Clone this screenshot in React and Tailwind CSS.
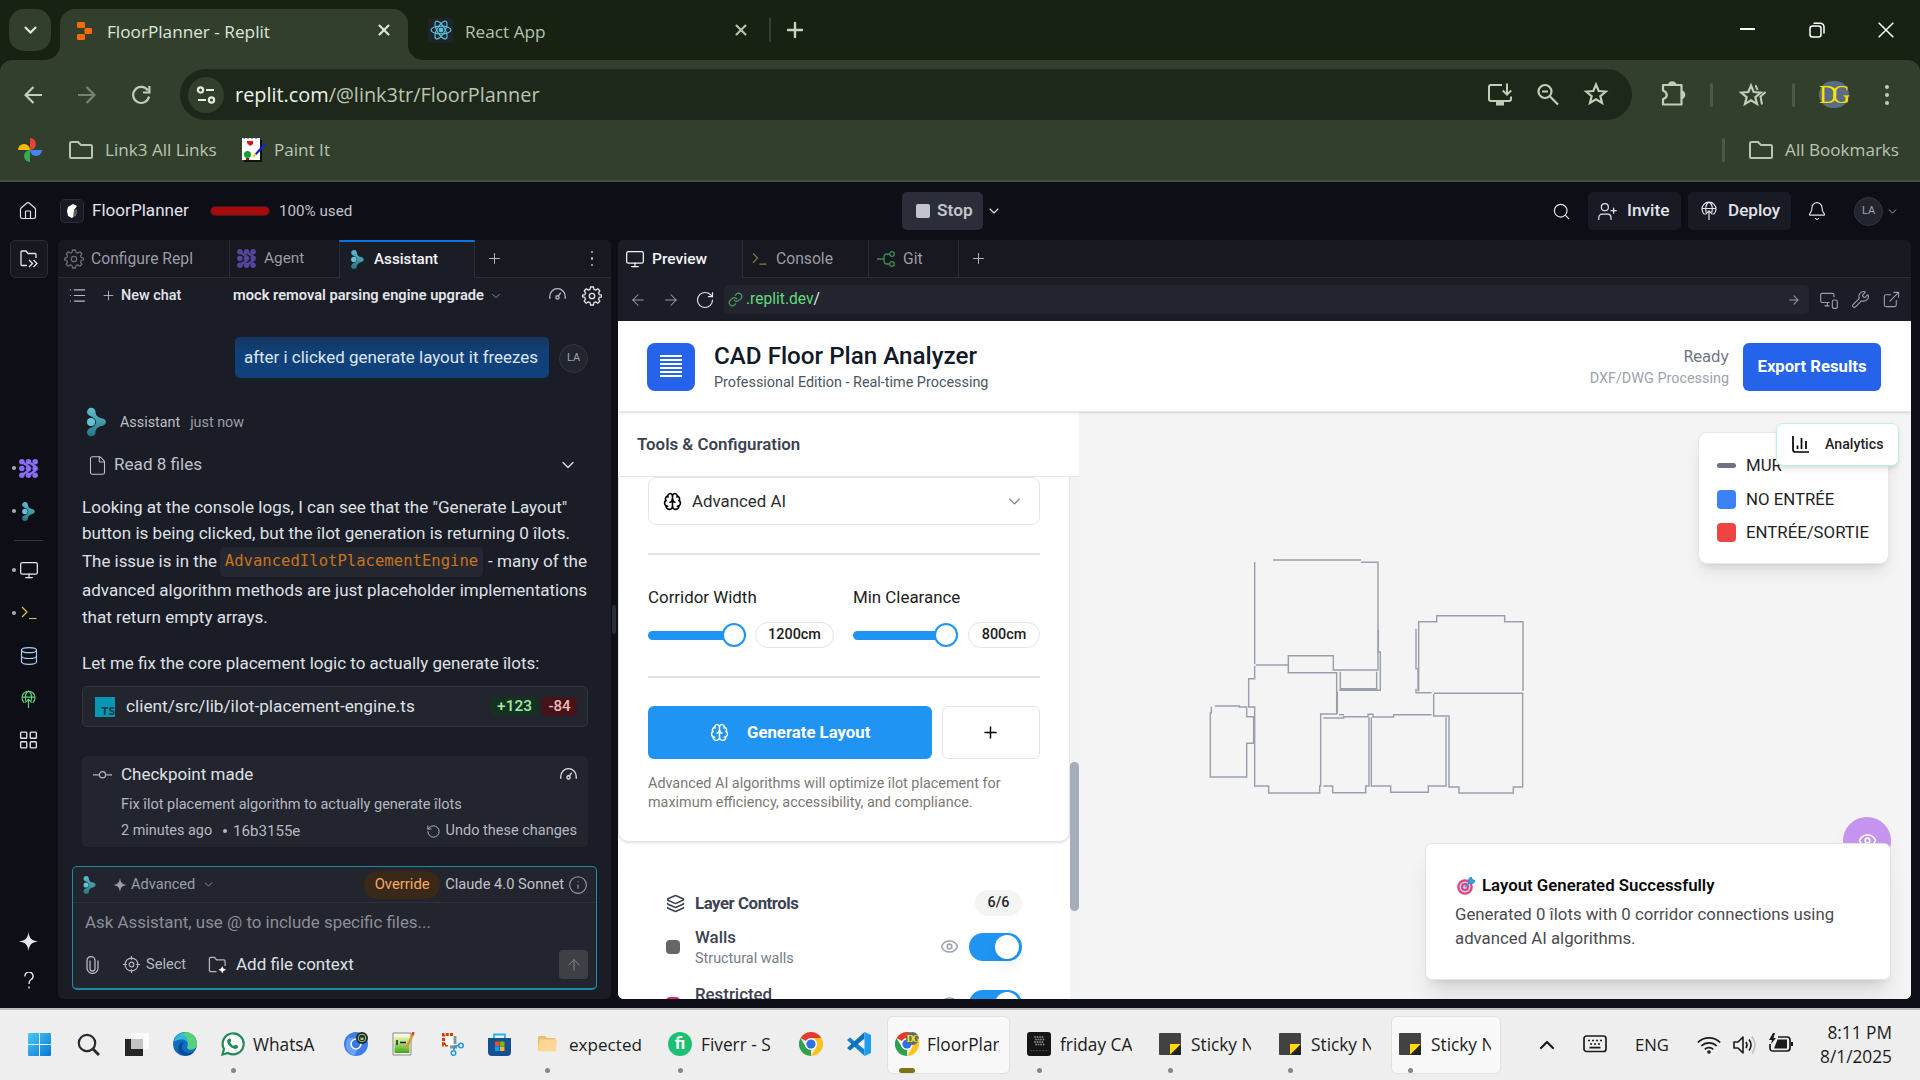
import React from "react";
import {
  ArrowLeft, ArrowRight, ArrowUp, Bell, Brain, ChevronDown, ChevronUp, Database, ExternalLink, Eye, File,
  Home, Info, Layers, LayoutGrid, Link, List, Monitor, MonitorSmartphone, Plus,
  RotateCcw, RotateCw, Search, Settings, UserPlus, Wrench, X,
} from "lucide-react";

/* ---------- shared glyphs ---------- */

function AssistantMark({ className }) {
  return (
    <svg viewBox="0 0 20 30" className={className} fill="none">
      <defs>
        <linearGradient id="am" x1="0" y1="0" x2="0" y2="1">
          <stop offset="0" stopColor="#5fbdd0" />
          <stop offset="1" stopColor="#277684" />
        </linearGradient>
      </defs>
      <path d="M4.500 0C7 0 9 2 9 4.500c0 4 3 6 6.500 6.500 2.500.5 4.500 2 4.500 4s-2 3.800-4.500 4.200C12 20 9 22 9 26c0 2.500-2 4-4.500 4S0 28.500 0 26s1.500-4 4-5c3-1.200 5.500-3 5.500-6S7 10.200 4 9C1.500 8 0 6.800 0 4.500S2 0 4.500 0Z" fill="url(#am)" />
      <circle cx="4.300" cy="15" r="4.300" fill="#62c4d8" />
    </svg>
  );
}

function AgentMark({ className }) {
  return (
    <svg viewBox="0 0 20 20" className={className} fill="currentColor" stroke="currentColor">
      {[3, 10, 17].map((x) => [3, 10, 17].map((y) => <circle key={`${x}-${y}`} cx={x} cy={y} r="2.900" stroke="none" />))}
      <path d="M3 3 L10 8 M10 3 L17 8 M3 17 L10 12 M10 17 L17 12" strokeWidth="2.600" strokeLinecap="round" />
    </svg>
  );
}

function Spark({ className }) {
  return (
    <svg viewBox="0 0 20 20" className={className} fill="currentColor">
      <path d="M10 0c.9 6.500 3 9.100 10 10-7 .9-9.100 3.500-10 10-.9-6.500-3-9.100-10-10 7-.9 9.100-3.500 10-10Z" />
    </svg>
  );
}

function Prompt({ className }) {
  return (
    <svg viewBox="0 0 16 14" className={className} fill="none" stroke="currentColor" strokeWidth="1.200">
      <path d="M1 1l5 5-5 5M8 12.500h7.500" />
    </svg>
  );
}

function DeployGlobe({ className }) {
  return (
    <svg viewBox="0 0 16 20" className={className} fill="none" stroke="currentColor" strokeWidth="1.200">
      <path d="M3.500 13.500A7 7 0 1 1 12.500 13.500M1.300 7.500h13.400M5.200 11.500c-1-3.500-.6-8 2.800-10.500 3.400 2.500 3.800 7 2.800 10.500M8 19v-9M4.500 13.300 8 9.800l3.500 3.500" />
    </svg>
  );
}

function Folder({ className }) {
  return (
    <svg viewBox="0 0 24 18" className={className} fill="none" stroke="currentColor" strokeWidth="2" strokeLinejoin="round">
      <path d="M1 15.500v-13Q1 1 2.500 1H9l3 3h9.500Q23 4 23 5.500v10q0 1.500-1.500 1.500h-19Q1 17 1 15.500Z" />
    </svg>
  );
}

function Star({ className }) {
  return (
    <svg viewBox="0 0 24 24" className={className} fill="none" stroke="currentColor" strokeWidth="2">
      <path d="M12 3.200l2.500 6 6.500.5-5 4.200 1.600 6.400L12 16.900l-5.600 3.400L8 13.900 3 9.700l6.500-.5Z" />
    </svg>
  );
}

function ChromeLogo({ className }) {
  return (
    <svg viewBox="0 0 24 24" className={className}>
      <path d="M12 12 1.600 6A12 12 0 0 1 22.400 6Z" fill="#e33b2e" />
      <path d="M12 6h10.400A12 12 0 0 1 12 24l5.200-9Z" fill="#fcc31e" />
      <path d="M1.600 6 6.800 15 12 18v6A12 12 0 0 1 1.600 6Z" fill="#2da14c" />
      <circle cx="12" cy="12" r="6" fill="#fff" />
      <circle cx="12" cy="12" r="4.600" fill="#2f6fe8" />
    </svg>
  );
}

/* ---------- browser ---------- */

function TabStrip() {
  return (
    <div className="flex h-[60px] items-start bg-[#182213] text-[#dfe6da]">
      <div className="ml-[9px] mt-[9px] flex size-[42px] items-center justify-center rounded-[15px] bg-[#323f2d]">
        <svg viewBox="0 0 14 9" className="w-[13px]" fill="none" stroke="currentColor" strokeWidth="2.400"><path d="M1 1l6 6 6-6" /></svg>
      </div>
      <div className="relative ml-[9px] mt-[9px] flex h-[51px] w-[348px] rounded-t-[15px] bg-[#323f2d]">
        <svg viewBox="0 0 15 15" className="absolute bottom-0 -left-[15px] size-[15px]"><path d="M15 0V15H0A15 15 0 0 0 15 0Z" fill="#323f2d" /></svg>
        <svg viewBox="0 0 15 15" className="absolute -right-[15px] bottom-0 size-[15px]"><path d="M0 0V15H15A15 15 0 0 1 0 0Z" fill="#323f2d" /></svg>
        <div className="flex h-[44px] w-full items-center">
          <svg viewBox="0 0 15 18" className="-mt-[1px] ml-[17px] h-[18px] w-[15px]" fill="#f96a0b">
            <rect width="8" height="6" rx="1.200" /><rect x="7.500" y="6" width="7.500" height="6" rx="1.200" /><rect y="12" width="8" height="6" rx="1.200" />
          </svg>
          <span className="mt-[2px] ml-[15px] text-[17.200px]">FloorPlanner - Replit</span>
          <X className="-mt-[2px] mr-[15px] ml-auto size-[18px]" strokeWidth={2.800} />
        </div>
      </div>
      <div className="mt-[9px] flex h-[44px] items-center text-[#b4c4a9]">
        <div className="mt-[-2px] ml-[20px] flex h-[25px] w-[25px] items-center justify-center rounded-[3px] bg-[#20232a]">
          <svg viewBox="0 0 22 22" className="size-[22px]" fill="none" stroke="#58c4dc" strokeWidth="1.200">
            <ellipse cx="11" cy="11" rx="10" ry="3.900" /><ellipse cx="11" cy="11" rx="10" ry="3.900" transform="rotate(60 11 11)" />
            <ellipse cx="11" cy="11" rx="10" ry="3.900" transform="rotate(120 11 11)" /><circle cx="11" cy="11" r="1.800" fill="#58c4dc" />
          </svg>
        </div>
        <span className="mt-[2px] ml-[12px] w-[267px] text-[17.200px]">React App</span>
        <X className="mt-[-2px] size-[18px]" strokeWidth={2.800} />
        <div className="mt-[-2px] ml-[19px] h-[24px] w-[2px] bg-[#34412f]" />
        <Plus className="mt-[-2px] ml-[12px] size-[24px] text-[#c6d3bd]" strokeWidth={2.400} />
      </div>
      <div className="ml-auto flex h-[60px] items-center text-white">
        <div className="flex w-[69px] justify-center"><div className="-mt-[2px] h-[2px] w-[15px] bg-white" /></div>
        <div className="flex w-[69px] justify-center">
          <svg viewBox="0 0 16 16" className="-mt-[1px] size-[16px]" fill="none" stroke="currentColor" strokeWidth="1.500">
            <rect x="1" y="4" width="11" height="11" rx="2.500" /><path d="M4.500 1.200H11A4 4 0 0 1 15 5v6.500" />
          </svg>
        </div>
        <div className="flex w-[69px] justify-center">
          <svg viewBox="0 0 16 16" className="-mt-[1px] size-[16px]" fill="none" stroke="currentColor" strokeWidth="1.500"><path d="M.7.7l14.600 14.600M15.300.7.7 15.300" /></svg>
        </div>
      </div>
    </div>
  );
}

function NavArrow({ className, flip }) {
  return (
    <svg viewBox="0 0 18 18" className={className} fill="none" stroke="currentColor" strokeWidth="2.200">
      <path d={flip ? "M0 9h16.500M8.500 1l8 8-8 8" : "M18 9H1.500M9.500 1l-8 8 8 8"} />
    </svg>
  );
}

function AddressRow() {
  return (
    <div className="bg-[#182213]">
      <div className="flex h-[69px] items-center rounded-t-[12px] bg-[#323f2d] pl-[6px] text-[#c0cfb6]">
        <div className="flex w-[54px] justify-center"><NavArrow className="size-[18px]" /></div>
        <div className="flex w-[54px] justify-center"><NavArrow flip className="size-[18px] text-[#76856e]" /></div>
        <div className="flex w-[54px] justify-center">
          <svg viewBox="0 0 20 20" className="size-[20px]" fill="none" stroke="currentColor" strokeWidth="2.200">
            <path d="M16.800 5.500A8 8 0 1 0 18 11.500M18.400 1v6.500H12" />
          </svg>
        </div>
        <div className="ml-[12px] flex h-[51px] w-[1452px] items-center rounded-full bg-[#1e281a]">
          <div className="ml-[8px] flex size-[36px] items-center justify-center rounded-full bg-[#323f2d] text-[#e3ebdd]">
            <svg viewBox="0 0 20 18" className="h-[18px] w-[20px]" fill="none" stroke="currentColor" strokeWidth="2.200">
              <circle cx="4.500" cy="4" r="2.600" /><path d="M10 4h8M2 14h8" /><circle cx="15.500" cy="14" r="2.600" />
            </svg>
          </div>
          <span className="ml-[11px] text-[19.900px] text-[#b9c5b1]"><span className="text-[#edf3e8]">replit.com</span>/@link3tr/FloorPlanner</span>
          <div className="mr-[12px] ml-auto flex">
            <div className="flex w-[48px] justify-center">
              <svg viewBox="0 0 24 22" className="w-[24px]" fill="none" stroke="currentColor" strokeWidth="2">
                <path d="M14 1.500H3Q1 1.500 1 3.500v12q0 2 2 2h18q2 0 2-2V13M19 0v11M14.800 7 19 11.200 23.200 7" /><path d="M8 20h8" strokeWidth="4" />
              </svg>
            </div>
            <div className="flex w-[48px] justify-center">
              <svg viewBox="0 0 22 22" className="w-[22px]" fill="none" stroke="currentColor" strokeWidth="2.200"><circle cx="8" cy="8" r="6.500" /><path d="M13 13l8 8M5 8h6" /></svg>
            </div>
            <div className="flex w-[48px] justify-center"><Star className="-mt-[1px] size-[26px]" /></div>
          </div>
        </div>
        <div className="ml-[16px] flex w-[50px] justify-center">
          <svg viewBox="0 0 25 25" className="-mt-[3px] size-[25px]" fill="none" stroke="currentColor" strokeWidth="2.200" strokeLinejoin="round">
            <path d="M2 4h18.500v19.500H2v-5.500c5-1.500 5-6.500 0-8.500Z" />
            <path d="M8 3.500a3.500 3.500 0 0 1 6.500 0M21 10.500a3.500 3.500 0 0 1 0 6.500Z" fill="currentColor" />
          </svg>
        </div>
        <div className="ml-[12px] h-[24px] w-[3px] rounded bg-[#4a5a43]" />
        <div className="relative ml-[19px] flex w-[42px]">
          <Star className="ml-[6px] size-[26px]" />
          <svg viewBox="0 0 10 24" className="absolute top-[1px] left-[23px] h-[24px] w-[11px]" fill="none" stroke="currentColor" strokeWidth="2"><path d="M0 2l2 5M10 9l-5 4.500 1.500 8" /></svg>
        </div>
        <div className="ml-[18px] h-[24px] w-[3px] rounded bg-[#4a5a43]" />
        <div className="ml-[24px] flex h-[27px] w-[30px] items-center justify-center rounded-full bg-[#5a6d80] font-['Liberation_Serif'] text-[25px] tracking-[-5px] text-[#ffe000]">
          <span className="-ml-[4px]">DG</span>
        </div>
        <div className="ml-[23px] flex w-[30px] flex-col items-center gap-[4px]">
          <div className="size-[4px] rounded-full bg-current" /><div className="size-[4px] rounded-full bg-current" /><div className="size-[4px] rounded-full bg-current" />
        </div>
      </div>
    </div>
  );
}

function BookmarksRow() {
  return (
    <div className="flex h-[53px] items-start border-b-[2px] border-[#434d3d] bg-[#323f2d] text-[17.100px] text-[#b9c5b1]">
      <div className="flex h-[42px] flex-1 items-center">
        <svg viewBox="0 0 24 24" className="ml-[18px] size-[24px]">
          <path d="M12 0a6 6 0 0 1 0 12Z" fill="#ea4335" /><path d="M24 12a6 6 0 0 1-12 0Z" fill="#4285f4" />
          <path d="M12 24a6 6 0 0 1 0-12Z" fill="#34a853" /><path d="M0 12a6 6 0 0 1 12 0Z" fill="#fbbc04" />
        </svg>
        <Folder className="ml-[27px] w-[24px]" />
        <span className="ml-[12px] w-[112px] whitespace-nowrap">Link3 All Links</span>
        <svg viewBox="0 0 24 24" className="ml-[25px] size-[24px]">
          <path d="M2 2h18v22H2Z" fill="#111" /><path d="M0 0h18v22H0Z" fill="#fff" /><path d="M1 .5h16" stroke="#999" strokeDasharray="2 2" /><path d="M5 3h6v3L8 8 5 5Z" fill="#d8121c" />
          <circle cx="5.500" cy="16.500" r="3.500" fill="#12a02c" /><path d="M4 20h3v2H4Z" fill="#b01218" /><path d="M13 17 23 6" stroke="#1620d8" strokeWidth="2.200" /><path d="M11 19l3-3" stroke="#e8d020" strokeWidth="2" />
        </svg>
        <span className="ml-[8px] whitespace-nowrap">Paint It</span>
        <div className="ml-auto h-[24px] w-[3px] rounded bg-[#4a5a43]" />
        <Folder className="ml-[24px] w-[24px]" />
        <span className="mr-[21px] ml-[12px] whitespace-nowrap">All Bookmarks</span>
      </div>
    </div>
  );
}

/* ---------- workspace header and rail ---------- */

function WorkspaceHeader() {
  return (
    <div className="flex h-[58px] items-center text-[#e2e3ea]">
      <Home className="ml-[18px] size-[20px]" strokeWidth={1.400} />
      <div className="ml-[22px] flex size-[24px] items-center justify-center rounded-[5px] border border-[#2c2f3a] bg-[#191b24]">
        <svg viewBox="0 0 14 14" className="size-[14px]"><path d="M3 3 8 0l4 2-3 4 2 5-4 3-4-2-1-5Z" fill="#fff" /><path d="M9 6l3-1v5l-4 3Z" fill="#506058" /></svg>
      </div>
      <span className="-mt-[1px] ml-[8px] w-[97px] text-[17.100px]">FloorPlanner</span>
      <div className="ml-[21px] h-[10px] w-[60px] rounded-full border border-[#3b1c24] bg-[#a80909]" />
      <span className="ml-[9px] w-[74px] text-[15.200px] whitespace-nowrap text-[#c3c5cc]">100% used</span>
      <div className="ml-[549px] flex h-[38px] w-[81px] items-center rounded-[5px] bg-[#2b2d38] text-[#c2c4cd]">
        <div className="ml-[14px] size-[14px] rounded-[2px] bg-current" />
        <span className="ml-[7px] text-[17.300px] font-semibold">Stop</span>
      </div>
      <ChevronDown className="ml-[3px] size-[16px]" strokeWidth={1.600} />
      <Search className="ml-auto size-[19px]" strokeWidth={1.500} />
      <div className="ml-[17px] flex h-[38px] w-[93px] items-center rounded-[5px] bg-[#191b24]">
        <UserPlus className="ml-[9px] size-[21px]" strokeWidth={1.400} /><span className="ml-[9px] text-[17.300px] font-medium">Invite</span>
      </div>
      <div className="ml-[7px] flex h-[38px] w-[103px] items-center rounded-[5px] bg-[#191b24]">
        <DeployGlobe className="ml-[13px] h-[20px] w-[16px]" /><span className="ml-[11px] text-[17.100px] font-medium">Deploy</span>
      </div>
      <Bell className="ml-[16px] size-[20px]" strokeWidth={1.400} />
      <div className="ml-[27px] flex size-[29px] items-center justify-center rounded-full border border-[#32343f] bg-[#23252e] text-[11px] text-[#a0a3ad]">LA</div>
      <ChevronDown className="mr-[21px] ml-[3px] size-[13px] text-[#a0a3ad]" strokeWidth={1.800} />
    </div>
  );
}

function RailItem({ className, dot, children }) {
  return (
    <div className={`flex h-[24px] shrink-0 items-center ${className}`}>
      <div className={dot ? "ml-[12px] size-[4px] rounded-full bg-[#a9abb4]" : "ml-[12px] size-[4px]"} />
      <div className="ml-[2px] flex w-[21px] justify-center">{children}</div>
    </div>
  );
}

function Rail() {
  return (
    <div className="flex w-[58px] flex-col text-[#e6e7ec]">
      <div className="ml-[10px] flex size-[38px] shrink-0 items-center justify-center rounded-[5px] border border-[#2a2c36] bg-[#171820]">
        <svg viewBox="0 0 18 18" className="size-[18px]" fill="none" stroke="currentColor" strokeWidth="1.300"><path d="M7 15.500H2Q1 15.500 1 14.500V2Q1 1 2 1h4l2 2.500h7q1 0 1 1V8M9 10l3.500 3.500L9 17M13.500 10l3.500 3.500-3.500 3.500" /></svg>
      </div>
      <RailItem dot className="mt-[178px]"><AgentMark className="size-[19px] text-[#8b6cf5]" /></RailItem>
      <RailItem dot className="mt-[19px]"><AssistantMark className="h-[19px] w-[13px]" /></RailItem>
      <div className="mt-[17px] ml-[14px] h-px w-[29px] shrink-0 bg-[#33353f]" />
      <RailItem dot className="mt-[17px]"><Monitor className="size-[20px]" strokeWidth={1.500} /></RailItem>
      <RailItem dot className="mt-[19px]"><Prompt className="h-[14px] w-[16px] text-[#e0c75a]" /></RailItem>
      <RailItem className="mt-[19px]"><Database className="size-[20px] text-[#a9cdf5]" strokeWidth={1.400} /></RailItem>
      <RailItem className="mt-[19px]"><DeployGlobe className="h-[19px] w-[15px] text-[#5fd67c]" /></RailItem>
      <RailItem className="mt-[17px]"><LayoutGrid className="size-[22px]" strokeWidth={1.500} /></RailItem>
      <RailItem className="mt-[177px]"><Spark className="size-[19px]" /></RailItem>
      <RailItem className="mt-[15px]">
        <svg viewBox="0 0 10 17" className="h-[17px] w-[10px]" fill="none" stroke="currentColor" strokeWidth="1.400"><path d="M1 4.500A4 4 0 1 1 7 7.500C5.500 8.600 5 9.500 5 12M5 14.500v2" /></svg>
      </RailItem>
    </div>
  );
}

/* ---------- assistant panel ---------- */

function GearIcon({ className }) {
  return (
    <svg viewBox="0 0 20 20" className={className} fill="none" stroke="currentColor" strokeWidth="1.300" strokeLinejoin="round">
      <path d="M8.600 1h2.800l.6 2.400 1.700.7 2.100-1.300 2 2-1.300 2.100.7 1.700 2.400.6v1.600l-2.400.6-.7 1.700 1.300 2.100-2 2-2.100-1.300-1.700.7-.6 2.400H8.600L8 16.600l-1.700-.7-2.100 1.300-2-2 1.300-2.100-.7-1.700L.6 10.800V9.200L3 8.600l.6-1.700-1.300-2.100 2-2 2.100 1.300L8 3.400Z" />
      <circle cx="10" cy="10" r="2.700" />
    </svg>
  );
}

function GaugeIcon({ className }) {
  return (
    <svg viewBox="0 0 18 14" className={className} fill="none" stroke="currentColor" strokeWidth="1.400">
      <path d="M.8 12.500V10A8.200 8.200 0 0 1 17.200 10v2.500M10 9.300l2.500-3.300" /><circle cx="9" cy="11" r="1.700" />
    </svg>
  );
}

function ClipIcon({ className }) {
  return (
    <svg viewBox="0 0 13 18" className={className} fill="none" stroke="currentColor" strokeWidth="1.300" strokeLinecap="round">
      <path d="M4 5v7.500a2.500 2.500 0 0 0 5 0V4.500a3.800 3.800 0 0 0-8 0v7.500a5.400 5.400 0 0 0 11 0V5" />
    </svg>
  );
}

function AssistantPanel() {
  return (
    <div className="flex h-[759px] w-[553px] flex-col rounded-[6px] bg-[#1b1d26]">
      <div className="flex h-[38px] shrink-0 rounded-t-[6px] border-b border-[#2a2c36] bg-[#171820] text-[#9a9da6]">
        <div className="flex w-[172px] items-center border-r border-[#2a2c36]"><GearIcon className="ml-[6px] size-[20px] text-[#6a6d76]" /><span className="ml-[7px] text-[15.700px]">Configure Repl</span></div>
        <div className="flex w-[109px] items-center"><AgentMark className="ml-[7px] size-[19px] text-[#54459a]" /><span className="ml-[8px] text-[15.400px]">Agent</span></div>
        <div className="-mb-px flex w-[136px] items-center border-x border-t-2 border-x-[#2a2c36] border-t-[#0a76e0] bg-[#1b1d26] pb-[2px]"><AssistantMark className="ml-[11px] h-[19px] w-[13px]" /><span className="ml-[10px] text-[15.200px] font-medium text-[#f3f4f7]">Assistant</span></div>
        <div className="flex flex-1 items-center">
          <Plus className="ml-[11px] size-[17px] text-[#b7b9c1]" strokeWidth={1.400} />
          <div className="mr-[18px] ml-auto flex flex-col gap-[4px]"><div className="size-[2.500px] rounded-full bg-[#b7b9c1]" /><div className="size-[2.500px] rounded-full bg-[#b7b9c1]" /><div className="size-[2.500px] rounded-full bg-[#b7b9c1]" /></div>
        </div>
      </div>
      <div className="flex h-[35px] shrink-0 items-center text-[#e4e5ea]">
        <List className="ml-[10px] size-[19px] text-[#b7b9c1]" strokeWidth={1.500} />
        <Plus className="ml-[14px] size-[15px] text-[#b7b9c1]" strokeWidth={1.400} />
        <span className="ml-[5px] w-[61px] text-[14.400px] font-medium whitespace-nowrap">New chat</span>
        <span className="ml-[51px] w-[251px] text-[14.650px] font-semibold whitespace-nowrap">mock removal parsing engine upgrade</span>
        <ChevronDown className="ml-[5px] size-[14px] text-[#8d909a]" strokeWidth={1.600} />
        <GaugeIcon className="-mt-[3px] ml-[46px] w-[17px] text-[#b7b9c1]" />
        <GearIcon className="ml-[16px] size-[20px]" />
      </div>

      <div className="mt-[24px] flex h-[41px] shrink-0 items-center justify-end pr-[23px]">
        <div className="flex h-[41px] w-[314px] items-center rounded-[5px] bg-gradient-to-b from-[#14365f] to-[#10417a] to-40% pl-[9px] text-[16.930px] whitespace-nowrap text-[#dfe5ee]">after i clicked generate layout it freezes</div>
        <div className="mt-[1px] ml-[10px] flex size-[29px] items-center justify-center rounded-full border border-[#32343f] bg-[#23252e] text-[11px] text-[#a0a3ad]">LA</div>
      </div>
      <div className="mt-[29px] flex h-[30px] shrink-0 items-center text-[14.350px] text-[#9a9da6]">
        <AssistantMark className="ml-[29px] h-[30px] w-[19px]" /><span className="mt-[2px] ml-[14px] text-[#bdbfc7]">Assistant</span><span className="mt-[2px] ml-[10px]">just now</span>
      </div>
      <div className="mt-[16px] flex h-[24px] shrink-0 items-center pr-[34px] text-[17.100px] text-[#c0c2ca]">
        <File className="ml-[29px] size-[21px]" strokeWidth={1.200} /><span className="ml-[6px]">Read 8 files</span>
        <ChevronDown className="mr-[-1px] ml-auto size-[20px] text-[#dfe0e6]" strokeWidth={1.500} />
      </div>
      <div className="mt-[17px] ml-[24px] flex shrink-0 flex-col text-[17.080px] leading-[26px] whitespace-nowrap text-[#dfe0e5]">
        <div className="h-[26px]">Looking at the console logs, I can see that the "Generate Layout"</div>
        <div className="h-[26px]">button is being clicked, but the îlot generation is returning 0 îlots.</div>
        <div className="flex h-[31px] items-center">
          <span className="-mt-[2px] w-[138px] text-[16.900px]">The issue is in the</span>
          <span className="flex h-[30px] w-[263px] items-center justify-center rounded-[5px] bg-[#252730] pb-[1px] font-['DejaVu_Sans_Mono'] text-[15.600px] text-[#c8741c]">AdvancedIlotPlacementEngine</span>
          <span className="-mt-[2px] ml-[5px]">- many of the</span>
        </div>
        <div className="h-[27px] text-[17px]">advanced algorithm methods are just placeholder implementations</div>
        <div className="h-[26px]">that return empty arrays.</div>
        <div className="mt-[20px] h-[26px] text-[17px]">Let me fix the core placement logic to actually generate îlots:</div>
      </div>
      <div className="mt-[10px] ml-[24px] flex h-[41px] w-[506px] shrink-0 items-center rounded-[5px] border border-[#32343f] bg-[#23252e] text-[#dfe0e5]">
        <div className="ml-[12px] flex size-[20px] items-end justify-end bg-[#0797b5] font-['Lato'] text-[12px] leading-[12px] font-black text-[#1b3a45]">TS</div>
        <span className="ml-[11px] text-[17.230px]">client/src/lib/ilot-placement-engine.ts</span>
        <span className="ml-auto flex h-[19px] w-[47px] items-center justify-center rounded-[4px] bg-[#14321f] text-[15.400px] font-medium text-[#a5e8ac]">+123</span>
        <span className="mr-[10px] ml-[4px] flex h-[19px] w-[35px] items-center justify-center rounded-[4px] bg-[#44141a] text-[15px] font-medium text-[#f5b8b4]">-84</span>
      </div>
      <div className="mt-[29px] ml-[24px] flex h-[91px] w-[506px] shrink-0 flex-col rounded-[5px] bg-[#23252e] text-[14.500px] whitespace-nowrap text-[#b5b8c0]">
        <div className="mt-[7px] flex h-[24px] items-center pr-[11px]">
          <svg viewBox="0 0 20 8" className="ml-[11px] w-[19px]" fill="none" stroke="currentColor" strokeWidth="1.300"><path d="M0 4h6M14 4h6" /><circle cx="10" cy="4" r="3.300" /></svg>
          <span className="ml-[9px] text-[17px] text-[#dfe0e5]">Checkpoint made</span>
          <GaugeIcon className="-mt-[2px] ml-auto w-[17px] text-[#dfe0e5]" />
        </div>
        <div className="mt-[6px] ml-[39px] flex h-[24px] items-center">Fix îlot placement algorithm to actually generate îlots</div>
        <div className="mt-[2px] flex h-[24px] items-center pr-[11px]">
          <span className="ml-[39px] w-[91px] text-[14.400px]">2 minutes ago</span><span className="ml-[11px] size-[4px] rounded-full bg-current" /><span className="ml-[6px] text-[15.100px]">16b3155e</span>
          <RotateCcw className="ml-auto size-[15px]" strokeWidth={1.500} /><span className="ml-[5px]">Undo these changes</span>
        </div>
      </div>
      <div className="mt-[19px] ml-[14px] flex h-[124px] w-[525px] shrink-0 flex-col rounded-[5px] border border-b-2 border-[#1f8ba1] bg-[#23252e]">
        <div className="flex h-[36px] items-center border-b border-[#2d2f39] text-[14.600px] text-[#9a9da6]">
          <AssistantMark className="ml-[10px] h-[18px] w-[13px]" /><Spark className="ml-[17px] size-[14px]" /><span className="ml-[4px] w-[65px]">Advanced</span><ChevronDown className="ml-[6px] size-[13px]" strokeWidth={1.600} />
          <span className="ml-auto flex h-[28px] w-[76px] items-center justify-center rounded-full bg-[#3a2819] text-[14.800px] text-[#f3ab62]">Override</span>
          <span className="ml-[5px] text-[14.700px] text-[#c0c2ca]">Claude 4.0 Sonnet</span><Info className="mr-[8px] ml-[4px] size-[20px]" strokeWidth={1.300} />
        </div>
        <div className="mt-[7px] ml-[12px] text-[16.900px] leading-[25px] text-[#8b8e98]">Ask Assistant, use @ to include specific files...</div>
        <div className="mt-[15px] flex h-[29px] items-center text-[#b5b8c0]">
          <ClipIcon className="ml-[13px] h-[18px] w-[13px]" />
          <svg viewBox="0 0 18 18" className="ml-[24px] size-[17px]" fill="none" stroke="currentColor" strokeWidth="1.200"><circle cx="9" cy="9" r="6.800" /><circle cx="9" cy="9" r="2.500" /><path d="M9 0v4M9 14v4M0 9h4M14 9h4" /></svg>
          <span className="ml-[6px] w-[41px] text-[14.600px]">Select</span>
          <svg viewBox="0 0 20 18" className="ml-[21px] h-[18px] w-[19px]" fill="none" stroke="currentColor" strokeWidth="1.300"><path d="M9 16H3Q1.500 16 1.500 14.500V2.500Q1.500 1 3 1h4l2 2.500h7.500Q18 3.500 18 5v5" /><path d="M15 10l1.200 2.800L19 14l-2.800 1.200L15 18l-1.200-2.800L11 14l2.800-1.200Z" fill="#fff" stroke="none" /></svg>
          <span className="ml-[9px] text-[17px] text-[#dfe0e5]">Add file context</span>
          <span className="mr-[8px] ml-auto flex size-[29px] items-center justify-center rounded-[4px] bg-[#3f4045] text-[#85868c]"><ArrowUp className="size-[18px]" strokeWidth={1.300} /></span>
        </div>
      </div>
    </div>
  );
}

/* ---------- preview panel ---------- */

function Slider({ track, label, value, pill }) {
  return (
    <div>
      <div className="text-[16.900px] leading-[24px] text-[#1c1c20]">{label}</div>
      <div className="mt-[13px] flex h-[26px] items-center">
        <div className={`relative flex h-[9px] items-center rounded-full bg-[#2094f3] ${track}`}>
          <div className="absolute right-0 size-[24px] rounded-full border-2 border-[#2094f3] bg-white" />
        </div>
        <div className={`flex h-[26px] items-center justify-center rounded-full border border-[#e4e4e6] text-[14.400px] font-medium ${pill}`}>{value}</div>
      </div>
    </div>
  );
}

function LayerRow({ swatch, name, detail }) {
  return (
    <div className="flex h-[57px] shrink-0 items-start pl-[48px]">
      <div className={`mt-[19px] size-[14px] rounded-[4px] ${swatch}`} />
      <div className="ml-[15px]">
        <div className="mt-[4px] text-[16.850px] leading-[24px] font-medium text-[#3b4353]">{name}</div>
        {detail && <div className="text-[14.400px] leading-[19px] text-[#747c8b]">{detail}</div>}
      </div>
      <Eye className="mt-[16px] ml-auto size-[19px] text-[#9ca3af]" strokeWidth={2} />
      <div className="mt-[12px] mr-[48px] ml-[10px] flex h-[28px] w-[53px] justify-end rounded-full bg-[#2094f3] p-[2px] pr-[3px]"><div className="size-[24px] rounded-full bg-white shadow-lg" /></div>
    </div>
  );
}

function ToolsSidebar() {
  return (
    <div className="flex w-[461px] flex-col">
      <div className="flex h-[65px] shrink-0 items-center border-b border-[#e5e7eb] bg-white pt-[1px] pl-[19px] text-[16.850px] font-semibold text-[#3b4353]">Tools &amp; Configuration</div>
      <div className="flex min-h-0 flex-1">
        <div className="flex w-[452px] flex-col overflow-hidden bg-white">
          <div className="flex h-[365px] shrink-0 flex-col rounded-b-[10px] border-x border-b border-[#e4e4e6] px-[29px] shadow-sm">
            <div className="flex h-[48px] shrink-0 items-center rounded-[8px] border border-[#e4e4e6] text-[#2c2c30]">
              <Brain className="ml-[14px] size-[19px] text-black" strokeWidth={2} /><span className="mt-[1px] ml-[10px] text-[16.850px]">Advanced AI</span><ChevronDown className="mr-[15px] ml-auto size-[19px] text-[#77777b]" strokeWidth={1.600} />
            </div>
            <div className="mt-[28px] h-[2px] shrink-0 bg-[#e2e2e3]" />
            <div className="mt-[30px] flex shrink-0 text-[#1c1c20]">
              <Slider label="Corridor Width" value="1200cm" track="w-[98px]" pill="ml-[9px] mr-[19px] w-[79px]" />
              <Slider label="Min Clearance" value="800cm" track="w-[105px]" pill="ml-[10px] w-[72px]" />
            </div>
            <div className="mt-[28px] h-[2px] shrink-0 bg-[#e2e2e3]" />
            <div className="mt-[28px] flex h-[53px] shrink-0">
              <div className="flex w-[284px] items-center rounded-[6px] bg-[#2094f3] text-white"><Brain className="ml-[62px] size-[19px]" strokeWidth={1.800} /><span className="mt-[1px] ml-[18px] text-[16.750px] font-bold">Generate Layout</span></div>
              <div className="ml-[10px] flex flex-1 items-center justify-center rounded-[6px] border border-[#e4e4e6] pr-[1px] text-black"><Plus className="size-[19px]" strokeWidth={1.800} /></div>
            </div>
            <div className="mt-[15px] text-[14.400px] leading-[19.200px] text-[#7c7875]">Advanced AI algorithms will optimize îlot placement for<br />maximum efficiency, accessibility, and compliance.</div>
          </div>
          <div className="mt-[48px] flex h-[26px] shrink-0 items-center pr-[48px] text-[#3b4353]">
            <Layers className="ml-[48px] size-[19px]" strokeWidth={2} /><span className="mt-[1px] ml-[10px] text-[16.750px] font-bold tracking-[-0.420px]">Layer Controls</span>
            <span className="ml-auto flex h-[26px] w-[47px] items-center justify-center rounded-full bg-[#f4f4f3] text-[14.400px] font-medium text-[#27272b]">6/6</span>
          </div>
          <div className="mt-[5px]" />
          <LayerRow swatch="bg-[#666]" name="Walls" detail="Structural walls" />
          <LayerRow swatch="bg-[#e0217d]" name="Restricted" />
        </div>
        <div className="flex-1 bg-[#f1f3f5]"><div className="mt-[285px] h-[149px] rounded-full bg-[#a5acba]" /></div>
      </div>
    </div>
  );
}

/* Each entry is one wall polyline. */
const WALLS = [
  "M224 96V403M279 90H543M543 97H594V420H460V377H325V428H470V552H422V768H419V789H266V768H224V531H206V446H224V407",
  "M228 405H325M595 300V366H601V481H478M481 425V476H590V425M472 485V550",
  "M105 528H178V531H200V560H221V640H200V741H91V549H94V530M221 560V640",
  "M430 768H458V788H557V768H567V562M430 564H491V560H564V553H579V561H641V554H755M477 554H492",
  "M574 562V768H632V787H745V768H798V562",
  "M708 296V416H714V484M708 476V488H755M716 484V275H770V257H974V275H1029V483",
  "M762 490H1028V771H1000V789H837V771H807V558H761V492",
];

function PlanCanvas() {
  return (
    <div className="relative flex-1 overflow-hidden bg-[#f4f4f4]">
      <svg viewBox="0 0 1140 870" className="absolute top-[118px] left-[101px] h-[290px] w-[380px]" fill="none" stroke="#999fac" strokeWidth="4.300">
        {WALLS.map((d) => <path key={d} d={d} />)}
      </svg>
      <div className="absolute top-[20px] left-[619px] flex h-[132px] w-[191px] flex-col gap-[10px] rounded-[9px] border border-[#e8e8ea] bg-white pt-[20px] pl-[18px] text-[16.800px] leading-[23.500px] text-[#1f1f23] shadow-lg">
        <div className="flex items-center"><div className="h-[5px] w-[19px] rounded-full bg-[#6b7380]" /><span className="mt-[1px] ml-[10px]">MUR</span></div>
        <div className="flex items-center"><div className="size-[19px] rounded-[4px] bg-[#3b82f6]" /><span className="ml-[10px]">NO ENTRÉE</span></div>
        <div className="flex items-center"><div className="size-[19px] rounded-[4px] bg-[#ef4444]" /><span className="ml-[10px]">ENTRÉE/SORTIE</span></div>
      </div>
      <div className="absolute top-[11px] left-[697px] flex h-[43px] w-[123px] items-center rounded-[7px] border border-[#bbf7d0] bg-white text-[#1f1f23] shadow-md">
        <svg viewBox="0 0 17 17" className="ml-[15px] size-[17px]" fill="none" stroke="#000" strokeWidth="1.700"><path d="M1 0v13.500Q1 16 3.500 16H17M5.500 9.500V13M9.500 2V13M14 5V13" /></svg>
        <span className="ml-[16px] text-[14.200px] font-medium">Analytics</span>
      </div>
      <div className="absolute top-[405px] left-[764px] flex size-[48px] justify-center rounded-full bg-[#c594ef] pt-[14px] text-white shadow-lg"><Eye className="size-[19px]" strokeWidth={2} /></div>
      <div className="absolute top-[431px] left-[346px] flex h-[137px] w-[466px] flex-col rounded-[7px] border border-[#e4e4e6] bg-white pl-[29px] text-[16.800px] text-[#4a4a4e] shadow-xl">
        <div className="mt-[30px] flex h-[24px] items-center text-[#0a0a0c]">
          <svg viewBox="0 0 18 18" className="ml-[2px] size-[18px]"><circle cx="8" cy="10" r="7.800" fill="#e0417a" /><circle cx="8" cy="10" r="5.600" fill="#c3d3e8" /><circle cx="8" cy="10" r="4" fill="#e0417a" /><circle cx="8" cy="10" r="2" fill="#c3d3e8" /><path d="M8 10 13 5M12 6l0-4 2-2 1 2.500L18 4l-2 2Z" stroke="#2b93dd" strokeWidth="1.300" fill="#3ea2ea" /></svg>
          <span className="ml-[7px] font-semibold">Layout Generated Successfully</span>
        </div>
        <div className="mt-[4px] leading-[24px]">Generated 0 îlots with 0 corridor connections using<br />advanced AI algorithms.</div>
      </div>
    </div>
  );
}

function PreviewPanel() {
  return (
    <div className="flex h-[759px] w-[1293px] flex-col overflow-hidden rounded-[6px] bg-[#1b1d26]">
      <div className="flex h-[38px] shrink-0 border-b border-[#2a2c36] bg-[#171820] text-[15.700px] text-[#9a9da6]">
        <div className="-mb-px flex w-[125px] items-center border-r border-[#2a2c36] bg-[#1b1d26] text-[#f3f4f7]"><Monitor className="ml-[7px] size-[20px]" strokeWidth={1.500} /><span className="mt-[1px] ml-[7px] text-[15.550px] font-medium">Preview</span></div>
        <div className="flex w-[126px] items-center border-r border-[#2a2c36]"><Prompt className="ml-[9px] h-[14px] w-[15px] text-[#8a7d3e]" /><span className="mt-[1px] ml-[9px]">Console</span></div>
        <div className="flex w-[90px] items-center border-r border-[#2a2c36]">
          <svg viewBox="0 0 18 16" className="ml-[8px] h-[16px] w-[18px] text-[#3f8a52]" fill="none" stroke="currentColor" strokeWidth="1.300"><circle cx="15" cy="3" r="2.300" /><circle cx="15" cy="13" r="2.300" /><path d="M0 8h7M12.500 3H10Q7 3 7 6v4q0 3 3 3h2.500" /></svg>
          <span className="mt-[1px] ml-[8px]">Git</span>
        </div>
        <div className="flex items-center"><Plus className="ml-[11px] size-[17px] text-[#b7b9c1]" strokeWidth={1.400} /></div>
      </div>
      <div className="flex h-[43px] shrink-0 items-center text-[#9a9da6]">
        <ArrowLeft className="ml-[11px] size-[18px]" strokeWidth={1.400} /><ArrowRight className="ml-[15px] size-[18px]" strokeWidth={1.400} /><RotateCw className="ml-[15px] size-[20px] text-[#e4e5ea]" strokeWidth={1.400} />
        <div className="ml-[9px] flex h-[29px] w-[1085px] items-center rounded-[5px] bg-[#23252e]">
          <Link className="ml-[4px] size-[15px] text-[#4fa562]" strokeWidth={1.800} /><span className="mt-[1px] ml-[3px] text-[15.600px] text-[#62d97b]">.replit.dev<span className="text-[#e4e5ea]">/</span></span>
          <ArrowRight className="mr-[8px] ml-auto size-[14px]" strokeWidth={1.800} />
        </div>
        <MonitorSmartphone className="ml-[10px] size-[20px]" strokeWidth={1.400} /><Wrench className="ml-[12px] size-[19px]" strokeWidth={1.400} /><ExternalLink className="ml-[12px] size-[19px]" strokeWidth={1.400} />
      </div>
      <div className="flex min-h-0 flex-1 flex-col bg-white">
        <div className="z-10 flex h-[91px] shrink-0 items-center border-b border-[#e5e7eb] bg-white pt-[2px] shadow-sm">
          <div className="ml-[29px] flex size-[48px] flex-col items-center justify-center gap-[2px] rounded-[8px] bg-[#2563eb] pb-[2px]">
            {[0, 1, 2, 3, 4, 5].map((i) => <div key={i} className="h-[2px] w-[22px] bg-white" />)}
          </div>
          <div className="ml-[19px]">
            <div className="text-[24.200px] leading-[30px] font-medium text-[#111827]">CAD Floor Plan Analyzer</div>
            <div className="mt-[2px] text-[14.400px] leading-[20px] text-[#4b5563]">Professional Edition - Real-time Processing</div>
          </div>
          <div className="ml-auto text-right">
            <div className="font-['DejaVu_Sans'] text-[15px] leading-[22px] tracking-[-0.200px] text-[#6b7280]">Ready</div>
            <div className="mt-[1px] text-[14.400px] leading-[20px] text-[#9ca3af]">DXF/DWG Processing</div>
          </div>
          <div className="mr-[30px] ml-[14px] flex h-[48px] w-[138px] items-center justify-center rounded-[6px] bg-[#2563eb] text-[16.650px] font-bold text-white">Export Results</div>
        </div>
        <div className="flex min-h-0 flex-1"><ToolsSidebar /><PlanCanvas /></div>
      </div>
    </div>
  );
}

/* ---------- taskbar ---------- */

function TaskIcon({ className, running, children }) {
  return (
    <div className={`relative -mt-[2px] flex h-[24px] shrink-0 items-center justify-center ${className}`}>
      {children}
      {running && <div className="absolute -bottom-[17px] size-[5px] rounded-full bg-[#868686]" />}
    </div>
  );
}

function StickyIcon() {
  return (
    <svg viewBox="0 0 22 22" className="size-[22px]"><rect width="22" height="22" rx="1" fill="#424242" /><path d="M11 11h11L11 22Z" fill="#ffd900" /><path d="M22 11v11H11Z" fill="#1c1c1c" opacity=".85" /></svg>
  );
}

function Taskbar() {
  return (
    <div className="flex h-[72px] items-center border-t-2 border-[#bcbcbc] bg-[#eee] text-[17.300px] whitespace-nowrap text-[#1b1b1b]">
      <TaskIcon className="ml-[28px] w-[23px]">
        <svg viewBox="0 0 23 23" className="size-[23px]"><defs><linearGradient id="wn" x1="0" y1="0" x2="1" y2="1"><stop offset="0" stopColor="#4cc8f7" /><stop offset="1" stopColor="#0678d4" /></linearGradient></defs><path d="M1 0h10v11H0V1Q0 0 1 0ZM12 0h10q1 0 1 1v10H12ZM0 12h11v11H1q-1 0-1-1ZM12 12h11v10q0 1-1 1H12Z" fill="url(#wn)" /></svg>
      </TaskIcon>
      <TaskIcon className="ml-[26px] w-[23px]"><svg viewBox="0 0 23 23" className="size-[23px]" fill="none" stroke="#2b2b2b" strokeWidth="2.200"><circle cx="10" cy="10" r="8.200" /><path d="M16 16l6 6" strokeWidth="3" /></svg></TaskIcon>
      <TaskIcon className="ml-[25px] w-[24px]"><svg viewBox="0 0 24 23" className="w-[24px]"><rect y="6" width="18" height="17" fill="#262626" /><rect x="6" width="18" height="16" fill="#fff" opacity=".72" /></svg></TaskIcon>
      <TaskIcon className="ml-[24px] w-[24px]">
        <svg viewBox="0 0 24 24" className="size-[24px]"><circle cx="12" cy="12" r="12" fill="#0f6cc4" /><path d="M.3 10A12 12 0 0 1 24 11.500c0 4-3 6-6.500 6-2.500 0-4-1.500-3-3 1.500-3-1-7-5.500-7-4 0-7 1-8.700 2.500Z" fill="#2fb8d8" /><path d="M13 .1A12 12 0 0 1 24 11.500c0 4-3 6-6.500 6-2.500 0-4-1.500-3-3C16 8 14 4 9 2Z" fill="#57d17a" /><path d="M9 14c-1 5 4 9 12 6-5 6-16 4-16-4 0-3 3-6 6-6-1 1-2 2-2 4Z" fill="#0b4a8c" /></svg>
      </TaskIcon>
      <TaskIcon running className="ml-[24px] w-[24px]">
        <svg viewBox="0 0 24 24" className="size-[24px]"><path d="M1.500 22.500 3 17A10.500 10.500 0 1 1 7 21Z" fill="#fff" stroke="#1f8a55" strokeWidth="2.200" /><path d="M8 6.500c1.500-.5 2 1 2.300 2.500-1.500 1.500-1 1.500 0 3s2.200 2.500 3.200 1.200c1-1 1.500-.5 3.500.8.500 2-1.500 3.200-3.500 2.800C9 15.500 6 12 6.200 9c0-1 .8-2 1.800-2.500Z" fill="#1f8a55" /></svg>
      </TaskIcon>
      <span className="ml-[8px] w-[63px]">WhatsA</span>
      <TaskIcon className="ml-[28px] w-[24px]">
        <svg viewBox="0 0 24 24" className="size-[24px]"><circle cx="12" cy="12" r="12" fill="#3f7ee8" /><path d="M12 6H4A12 12 0 0 0 10 24l5-9Z" fill="#6aa2f7" /><circle cx="12" cy="12" r="5.600" fill="#fff" /><circle cx="12" cy="12" r="4.200" fill="#3a78e6" /><circle cx="18" cy="6" r="6" fill="#1c2a1c" /><circle cx="18" cy="6" r="3.800" fill="none" stroke="#a8c89a" /><path d="M16.500 8V5.500h3V8Z" fill="#a8c89a" /></svg>
      </TaskIcon>
      <TaskIcon className="ml-[24px] w-[23px]">
        <svg viewBox="0 0 23 24" className="w-[23px]"><defs><linearGradient id="np" x1="0" y1="0" x2="0" y2="1"><stop offset="0" stopColor="#eef8b0" /><stop offset="1" stopColor="#3fa818" /></linearGradient></defs><path d="M1 1h18v22H1Z" fill="#f4f4f0" stroke="#888" /><path d="M2.500 4.500h15v16.500h-15Z" fill="url(#np)" /><path d="M5 8v5M8 10.500h6" stroke="#222" strokeWidth="1.500" /><path d="M14 17 21 2" stroke="#e0952a" strokeWidth="2.400" /><path d="M20.500 3l1-3" stroke="#c43" strokeWidth="2.400" /></svg>
      </TaskIcon>
      <TaskIcon className="ml-[27px] w-[22px]">
        <svg viewBox="0 0 22 23" className="w-[22px]" fill="none"><path d="M11 1.500H1.500V12H7" stroke="#d83b01" strokeWidth="3" strokeDasharray="3 1.300" /><path d="M4 4h8v8H4Z" fill="#fff" /><path d="M13 3v8M8 14h7" stroke="#8a8f98" strokeWidth="2.800" /><circle cx="19" cy="12.500" r="2.300" stroke="#1a9be0" strokeWidth="1.500" /><circle cx="11.500" cy="20" r="2.300" stroke="#1a9be0" strokeWidth="1.500" /><path d="M11.500 17.500 13 13l4-.5" stroke="#1a9be0" strokeWidth="1.500" /></svg>
      </TaskIcon>
      <TaskIcon className="ml-[24px] w-[23px]">
        <svg viewBox="0 0 23 23" className="w-[23px]"><path d="M0 5h23v14q0 4-4 4H4q-4 0-4-4Z" fill="#174f93" /><path d="M6 5V1.500h11V5" fill="none" stroke="#28b4ef" strokeWidth="1.800" /><path d="M7 8.500h4.500V13H7Z" fill="#f25022" /><path d="M12 8.500h4.500V13H12Z" fill="#7fba00" /><path d="M7 13.500h4.500V18H7Z" fill="#00a4ef" /><path d="M12 13.500h4.500V18H12Z" fill="#ffb900" /></svg>
      </TaskIcon>
      <TaskIcon running className="ml-[27px] w-[19px]"><svg viewBox="0 0 19 16" className="w-[19px]"><path d="M0 1.500Q0 0 1.500 0H7l2 2h7q1.500 0 1.500 1.500V14H0Z" fill="#eebd6c" /><path d="M2 3.500h17l-1 11q0 1-1 1H1q-1 0-1-1Z" fill="#ffd795" /></svg></TaskIcon>
      <span className="ml-[12px] w-[73px] text-[17.100px]">expected</span>
      <TaskIcon running className="ml-[26px] w-[24px]"><div className="flex size-[24px] items-center justify-center rounded-full bg-[#1dbf73] pb-[2px] font-['Lato'] text-[17px] font-black text-white">fi</div></TaskIcon>
      <span className="ml-[9px] w-[72px]">Fiverr - S</span>
      <TaskIcon className="ml-[26px] w-[24px]"><ChromeLogo className="size-[24px]" /></TaskIcon>
      <TaskIcon className="ml-[24px] w-[24px]">
        <svg viewBox="0 0 24 24" className="size-[24px]"><path d="M17.500 24v-6.500L3 5.500 0 8Z" fill="#0d83cf" /><path d="M17.500 0v6.500L3 18.500 0 16Z" fill="#0b71b8" /><path d="M17.500 0 24 3v18l-6.500 3Z" fill="#1f9cf0" /></svg>
      </TaskIcon>
      <div className="ml-[16px] flex h-[58px] w-[123px] items-center rounded-[6px] border border-[#e2e2e2] bg-[#f8f8f8]">
        <div className="relative -mt-[2px] ml-[7px] flex size-[24px] justify-center">
          <ChromeLogo className="size-[24px]" />
          <div className="absolute top-0 right-0 flex h-[13px] w-[13px] items-center justify-center rounded-full bg-[#5a6d80] font-['Liberation_Serif'] text-[10px] font-bold tracking-[-1.500px] text-[#ffe000]">DG</div>
          <div className="absolute -bottom-[17px] h-[5px] w-[16px] rounded-full bg-[#7d7414]" />
        </div>
        <span className="ml-[8px] w-[72px] overflow-hidden">FloorPlan</span>
      </div>
      <TaskIcon running className="ml-[17px] w-[24px]">
        <svg viewBox="0 0 24 24" className="size-[24px]"><rect width="24" height="24" rx="3" fill="#161616" />
          {[5, 7.500, 10, 12.500].map((y, r) => [8, 10.500, 13, 15.500].map((x) => <circle key={`${x}-${y}`} cx={x + (r % 2)} cy={y} r=".9" fill="#8a8a8a" />))}<path d="M3 18.500h18" stroke="#444" strokeDasharray="2 1" /></svg>
      </TaskIcon>
      <span className="ml-[9px] w-[72px] overflow-hidden">friday CA</span>
      <TaskIcon running className="ml-[27px] w-[22px]"><StickyIcon /></TaskIcon>
      <span className="ml-[10px] w-[60px] overflow-hidden">Sticky N</span>
      <TaskIcon running className="ml-[28px] w-[22px]"><StickyIcon /></TaskIcon>
      <span className="ml-[10px] w-[60px] overflow-hidden">Sticky N</span>
      <div className="ml-[20px] flex h-[58px] w-[110px] items-center rounded-[6px] border border-[#e2e2e2] bg-[#f8f8f8]">
        <TaskIcon running className="ml-[7px] w-[22px]"><StickyIcon /></TaskIcon>
        <span className="ml-[10px] w-[60px] overflow-hidden">Sticky N</span>
      </div>
      <ChevronUp className="ml-[34px] size-[24px]" strokeWidth={2.200} />
      <svg viewBox="0 0 24 18" className="-mt-[2px] ml-[24px] w-[24px]" fill="none" stroke="currentColor" strokeWidth="1.700"><rect x="1" y="1" width="22" height="15.500" rx="2.500" /><path d="M5 5.500h2M9 5.500h2M13 5.500h2M17 5.500h2M7 9h2M11 9h2M15 9h2M6.500 12.700h11" /></svg>
      <span className="ml-[28px] w-[34px] text-[16.700px]">ENG</span>
      <svg viewBox="0 0 24 18" className="-mt-[1px] ml-[28px] w-[24px]" fill="none" stroke="currentColor" strokeWidth="1.700"><path d="M.8 6.500a16 16 0 0 1 22.400 0M4.300 10a11 11 0 0 1 15.400 0M7.800 13.300a6 6 0 0 1 8.400 0" /><circle cx="12" cy="16" r="1.800" fill="currentColor" stroke="none" /></svg>
      <svg viewBox="0 0 24 20" className="-mt-[1px] ml-[12px] w-[24px]" fill="none" stroke="currentColor" strokeWidth="1.600"><path d="M1 7h4l5-5v16l-5-5H1Z" strokeLinejoin="round" /><path d="M13 7q2 3 0 6M16 4.500q4 5.500 0 11" /><path d="M19 1.500q6 8.500 0 17" stroke="#c0c0c0" /></svg>
      <svg viewBox="0 0 24 20" className="-mt-[4px] ml-[12px] w-[24px]" fill="none" stroke="currentColor" strokeWidth="1.700"><path d="M9 4h9q3 0 3 3v8q0 3-3 3H4q-3 0-3-3v-4" /><path d="M5 15.500l3.500-9H18v9ZM22 9h2v4h-2ZM4 0 0 7h3L2 11l5-6H4.500L6 0Z" fill="currentColor" stroke="none" /></svg>
      <div className="mr-[28px] ml-auto -mt-[1px] text-right leading-[24px]"><div>8:11 PM</div><div>8/1/2025</div></div>
    </div>
  );
}

export default function App() {
  return (
    <div className="h-[1080px] w-[1920px] overflow-hidden bg-[#0e0e17] font-['Open_Sans',sans-serif]">
      <TabStrip />
      <AddressRow />
      <BookmarksRow />
      <div className="h-[826px] font-['Roboto',sans-serif]">
        <WorkspaceHeader />
        <div className="flex">
          <Rail />
          <AssistantPanel />
          <div className="w-[7px]"><div className="mt-[365px] ml-[1px] h-[29px] w-[4px] rounded-full bg-[#2a2c36]" /></div>
          <PreviewPanel />
        </div>
      </div>
      <Taskbar />
    </div>
  );
}
